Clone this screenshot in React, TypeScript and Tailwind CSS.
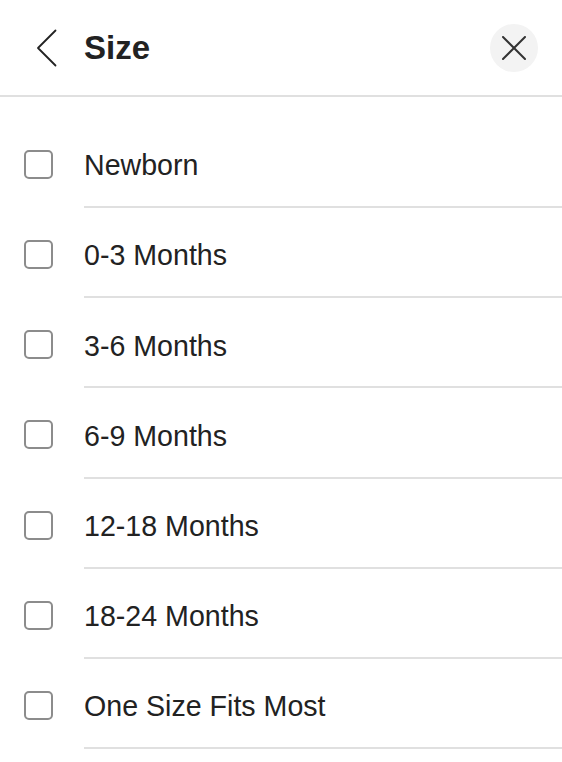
import React, { useState } from 'react';

const sizes = [
  'Newborn',
  '0-3 Months',
  '3-6 Months',
  '6-9 Months',
  '12-18 Months',
  '18-24 Months',
  'One Size Fits Most',
];

const SizeRow = ({ label }: { label: string }) => {
  const [checked, setChecked] = useState(false);

  return (
    <div className="flex cursor-pointer" onClick={() => setChecked(!checked)}>
      <div className="pl-[24px] pr-[31px] pt-[32px]">
        <div
          className={
            checked
              ? 'w-[29px] h-[29px] rounded-[5px] border-2 border-[#222] bg-[#222]'
              : 'w-[29px] h-[29px] rounded-[5px] border-2 border-[#8c8c8c] bg-white'
          }
        />
      </div>
      <div className="flex-1 pt-[32px] pb-[27.17px] border-b-2 border-[#e0e0e0]">
        <div className="h-[29px] flex items-center pt-[2px] text-[28.6px] leading-none text-[#222]">
          {label}
        </div>
      </div>
    </div>
  );
};

export default function App() {
  return (
    <div
      className="w-[562px] min-h-[762px] bg-white"
      style={{ fontFamily: '"Liberation Sans", Arial, sans-serif' }}
    >
      {/* 헤더 */}
      <div className="h-[97px] flex items-center pl-[36px] pr-[24px] border-b-2 border-[#e0e0e0]">
        <button className="w-[21px] h-[38px] flex items-center justify-center">
          <svg width="21" height="38" viewBox="0 0 21 38" fill="none">
            <polyline
              points="19.5,1.5 2,19 19.5,36.5"
              stroke="#222"
              strokeWidth="1.8"
              strokeLinecap="round"
              strokeLinejoin="round"
            />
          </svg>
        </button>
        <h1 className="ml-[27px] text-[33px] font-bold text-[#222] leading-none">
          Size
        </h1>
        <button className="ml-auto w-[48px] h-[48px] rounded-full bg-[#f3f3f3] flex items-center justify-center">
          <svg width="24" height="24" viewBox="0 0 24 24" fill="none">
            <path
              d="M1 1 L23 23 M23 1 L1 23"
              stroke="#333"
              strokeWidth="2"
              strokeLinecap="round"
            />
          </svg>
        </button>
      </div>
      <div className="pt-[21px]">
        {sizes.map((s) => (
          <SizeRow key={s} label={s} />
        ))}
      </div>
    </div>
  );
}
